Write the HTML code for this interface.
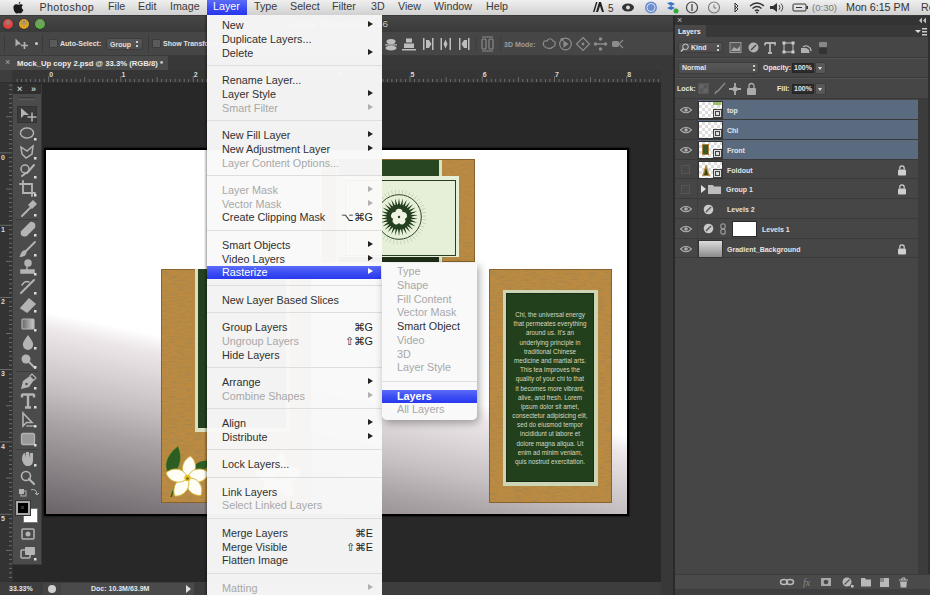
<!DOCTYPE html><html><head><meta charset="utf-8"><style>
*{margin:0;padding:0;box-sizing:border-box}
html,body{width:930px;height:595px;overflow:hidden;background:#282828;font-family:"Liberation Sans",sans-serif}
.a{position:absolute}
.t{position:absolute;white-space:nowrap}
.menu{position:absolute;background:rgba(249,249,249,0.968)}
.mi{position:absolute;left:15px;font-size:10.8px;color:#303030;white-space:nowrap;line-height:12px}
.dis{color:#a8a8a8}
.sep{position:absolute;left:0;right:0;height:1px;background:#dedede}
.arr{position:absolute;width:0;height:0;border-left:5px solid #222;border-top:3.5px solid transparent;border-bottom:3.5px solid transparent}
.arr.dis{border-left-color:#b0b0b0}
.sc{position:absolute;font-size:10.8px;color:#1c1c1c;line-height:12px;text-align:right;white-space:nowrap}
.pt{position:absolute;white-space:nowrap;font-size:7px;font-weight:bold;color:#e4e4e4;line-height:8px}
</style></head><body><div id="root" style="position:absolute;left:0;top:0;width:930px;height:595px;overflow:hidden">
<div class="a" style="left:0px;top:15px;width:675px;height:17px;background:linear-gradient(#474747,#3a3a3a)"></div>
<div class="t" style="left:238px;top:18px;width:200px;text-align:center;font-size:9.8px;color:#cfcfcf;line-height:12px;text-shadow:0 -1px 0 #222">Adobe Photoshop CS6</div>
<div class="a" style="left:3px;top:19px;width:10px;height:10px;border-radius:50%;background:radial-gradient(circle at 50% 35%,#fff6 0,#e0443e 45%,#e0443e 100%);box-shadow:0 0 0 0.5px #0006"></div>
<div class="a" style="left:19px;top:19px;width:10px;height:10px;border-radius:50%;background:radial-gradient(circle at 50% 35%,#fff6 0,#dea123 45%,#dea123 100%);box-shadow:0 0 0 0.5px #0006"></div>
<div class="a" style="left:35px;top:19px;width:10px;height:10px;border-radius:50%;background:radial-gradient(circle at 50% 35%,#fff6 0,#5fb043 45%,#5fb043 100%);box-shadow:0 0 0 0.5px #0006"></div>
<div class="a" style="left:0px;top:31px;width:675px;height:25px;background:#464646;border-top:1px solid #3a3a3a;border-bottom:1px solid #3a3a3a"></div>
<div class="a" style="left:0px;top:56px;width:675px;height:14px;background:#383838"></div>
<div class="a" style="left:0px;top:70px;width:662px;height:13px;background:#353535"></div>
<div class="a" style="left:0px;top:83px;width:12px;height:499px;background:#333333"></div>
<div class="a" style="left:661px;top:70px;width:12px;height:525px;background:#383838"></div>
<div class="a" style="left:673px;top:15px;width:2px;height:580px;background:#2a2a2a"></div>
<div class="a" style="left:0px;top:582px;width:661px;height:13px;background:#3d3d3d"></div>
<div class="a" style="left:4px;top:36px;width:1px;height:16px;background:#3a3a3a"></div>
<svg class="a" style="left:14px;top:37px" width="16" height="13" viewBox="0 0 16 13"><path d="M1.5 1.5 L1.5 9.5 L3.8 7.4 L7.5 7.4 Z" fill="#b0b0b0"/><path d="M10.5 5 v7 M7 8.5 h7" stroke="#b0b0b0" stroke-width="1.7"/></svg>
<div class="a" style="left:35px;top:42px;width:3px;height:3px;background:#ccc;border-radius:50%"></div>
<div class="a" style="left:42px;top:34px;width:1px;height:19px;background:#3a3a3a"></div>
<div class="a" style="left:49px;top:39px;width:9px;height:9px;background:#5a5a5a;border:1px solid #3c3c3c;border-radius:1px"></div>
<div class="t" style="left:60px;top:39px;font-size:7px;font-weight:bold;color:#e0e0e0;line-height:9px">Auto-Select:</div>
<div class="a" style="left:106px;top:38px;width:37px;height:12px;background:linear-gradient(#565656,#4e4e4e);border:1px solid #3c3c3c;border-radius:2px"></div>
<div class="t" style="left:110px;top:40.5px;font-size:7px;font-weight:bold;color:#e0e0e0;line-height:8px">Group</div>
<div class="a" style="left:136px;top:41px;width:2px;height:2px;background:#ccc"></div>
<div class="a" style="left:136px;top:45px;width:2px;height:2px;background:#ccc"></div>
<div class="a" style="left:148px;top:34px;width:1px;height:19px;background:#3a3a3a"></div>
<div class="a" style="left:152px;top:39px;width:9px;height:9px;background:#5a5a5a;border:1px solid #3c3c3c;border-radius:1px"></div>
<div class="t" style="left:163px;top:39px;font-size:7px;font-weight:bold;color:#e0e0e0;line-height:9px">Show Transform Controls</div>
<svg class="a" style="left:380px;top:35px" width="295" height="18" viewBox="0 0 295 18">
<g fill="#bdbdbd" stroke="none">
<path d="M5 9.3 h12 v1.2 h-12z"/><ellipse cx="11" cy="6.5" rx="4.5" ry="2.6"/><ellipse cx="11" cy="13" rx="5.5" ry="2.6"/>
<path d="M22 14 h14 v1.5 h-14z"/><rect x="26" y="3.5" width="6" height="4"/><rect x="24" y="8.5" width="10" height="4.5"/>
<rect x="43" y="3" width="1.5" height="12"/><rect x="52" y="3" width="1.5" height="12"/><path d="M46 5 h3 l2.5 4 l-2.5 4 h-3z"/>
<rect x="60.5" y="3" width="1.5" height="12"/><rect x="69.5" y="3" width="1.5" height="12"/><path d="M65.5 4.5 l2 4.5 l-2 4.5 l-2 -4.5z"/>
<rect x="79" y="3" width="1.5" height="12"/><rect x="88" y="3" width="1.5" height="12"/><path d="M87 5 h-3 l-2.5 4 l2.5 4 h3z"/>
</g>
<rect x="95.5" y="1" width="1" height="16" fill="#3c3c3c"/>
<g fill="none" stroke="#8a8a8a" stroke-width="1.2"><rect x="102" y="4" width="4" height="10" rx="1"/><rect x="109" y="4" width="4" height="10" rx="1"/><path d="M102 2 h11 M102 16 h11"/></g>
<rect x="120.5" y="1" width="1" height="16" fill="#3c3c3c"/>
<text x="124" y="11.5" font-family="Liberation Sans" font-size="7" font-weight="bold" fill="#9c9c9c">3D Mode:</text>
<g fill="none" stroke="#8c8c8c" stroke-width="1.2">
<path d="M164 11 c-2 -3 0 -6 3 -5 c1 -3 5 -3 6 0 c3 0 3 5 0 6 c-2 2 -7 2 -9 -1z"/>
<circle cx="185.5" cy="9" r="5.8"/><path d="M184 6.5 l3.5 2.5 l-3.5 2.5z" fill="#8c8c8c"/><circle cx="182" cy="4.5" r="1" fill="#8c8c8c"/>
<path d="M203 2.5 l6.5 6.5 l-6.5 6.5 l-6.5 -6.5 z"/><circle cx="203" cy="9" r="0.8" fill="#8c8c8c"/>
</g>
<g fill="#8c8c8c"><circle cx="220.5" cy="4" r="1.8"/><circle cx="220.5" cy="14" r="1.8"/><circle cx="215.5" cy="9" r="1.8"/><circle cx="225.5" cy="9" r="1.8"/><rect x="217" y="8.3" width="7" height="1.4"/>
<rect x="232" y="6" width="7" height="6" rx="1.5"/><path d="M239 9 l4 -4 M239 9 l4 4" stroke="#8c8c8c" stroke-width="1.1"/></g>
</svg>
<div class="a" style="left:0px;top:56px;width:168px;height:14px;background:#4a4a4a"></div>
<div class="t" style="left:5px;top:58px;font-size:9px;color:#aaa;line-height:9px">&#215;</div>
<div class="t" style="left:17px;top:58.5px;font-size:7.7px;font-weight:bold;color:#ececec;line-height:9px">Mock_Up copy 2.psd @ 33.3% (RGB/8) *</div>
<svg class="a" style="left:0;top:70px" width="662" height="13"><rect x="16.7" y="9" width="0.8" height="3" fill="#7a7a7a"/><rect x="21.2" y="9" width="0.8" height="3" fill="#7a7a7a"/><rect x="25.7" y="9" width="0.8" height="3" fill="#7a7a7a"/><rect x="30.2" y="9" width="0.8" height="3" fill="#7a7a7a"/><rect x="34.8" y="9" width="0.8" height="3" fill="#7a7a7a"/><rect x="39.3" y="9" width="0.8" height="3" fill="#7a7a7a"/><rect x="43.8" y="9" width="0.8" height="3" fill="#7a7a7a"/><rect x="48.3" y="6" width="0.8" height="6" fill="#7a7a7a"/><rect x="52.8" y="9" width="0.8" height="3" fill="#7a7a7a"/><rect x="57.3" y="9" width="0.8" height="3" fill="#7a7a7a"/><rect x="61.8" y="9" width="0.8" height="3" fill="#7a7a7a"/><rect x="66.4" y="9" width="0.8" height="3" fill="#7a7a7a"/><rect x="70.9" y="9" width="0.8" height="3" fill="#7a7a7a"/><rect x="75.4" y="9" width="0.8" height="3" fill="#7a7a7a"/><rect x="79.9" y="9" width="0.8" height="3" fill="#7a7a7a"/><rect x="84.4" y="7" width="0.8" height="5" fill="#7a7a7a"/><rect x="88.9" y="9" width="0.8" height="3" fill="#7a7a7a"/><rect x="93.5" y="9" width="0.8" height="3" fill="#7a7a7a"/><rect x="98.0" y="9" width="0.8" height="3" fill="#7a7a7a"/><rect x="102.5" y="9" width="0.8" height="3" fill="#7a7a7a"/><rect x="107.0" y="9" width="0.8" height="3" fill="#7a7a7a"/><rect x="111.5" y="9" width="0.8" height="3" fill="#7a7a7a"/><rect x="116.0" y="9" width="0.8" height="3" fill="#7a7a7a"/><rect x="120.5" y="6" width="0.8" height="6" fill="#7a7a7a"/><rect x="125.1" y="9" width="0.8" height="3" fill="#7a7a7a"/><rect x="129.6" y="9" width="0.8" height="3" fill="#7a7a7a"/><rect x="134.1" y="9" width="0.8" height="3" fill="#7a7a7a"/><rect x="138.6" y="9" width="0.8" height="3" fill="#7a7a7a"/><rect x="143.1" y="9" width="0.8" height="3" fill="#7a7a7a"/><rect x="147.6" y="9" width="0.8" height="3" fill="#7a7a7a"/><rect x="152.2" y="9" width="0.8" height="3" fill="#7a7a7a"/><rect x="156.7" y="7" width="0.8" height="5" fill="#7a7a7a"/><rect x="161.2" y="9" width="0.8" height="3" fill="#7a7a7a"/><rect x="165.7" y="9" width="0.8" height="3" fill="#7a7a7a"/><rect x="170.2" y="9" width="0.8" height="3" fill="#7a7a7a"/><rect x="174.7" y="9" width="0.8" height="3" fill="#7a7a7a"/><rect x="179.3" y="9" width="0.8" height="3" fill="#7a7a7a"/><rect x="183.8" y="9" width="0.8" height="3" fill="#7a7a7a"/><rect x="188.3" y="9" width="0.8" height="3" fill="#7a7a7a"/><rect x="192.8" y="6" width="0.8" height="6" fill="#7a7a7a"/><rect x="197.3" y="9" width="0.8" height="3" fill="#7a7a7a"/><rect x="201.8" y="9" width="0.8" height="3" fill="#7a7a7a"/><rect x="206.3" y="9" width="0.8" height="3" fill="#7a7a7a"/><rect x="210.9" y="9" width="0.8" height="3" fill="#7a7a7a"/><rect x="215.4" y="9" width="0.8" height="3" fill="#7a7a7a"/><rect x="219.9" y="9" width="0.8" height="3" fill="#7a7a7a"/><rect x="224.4" y="9" width="0.8" height="3" fill="#7a7a7a"/><rect x="228.9" y="7" width="0.8" height="5" fill="#7a7a7a"/><rect x="233.4" y="9" width="0.8" height="3" fill="#7a7a7a"/><rect x="238.0" y="9" width="0.8" height="3" fill="#7a7a7a"/><rect x="242.5" y="9" width="0.8" height="3" fill="#7a7a7a"/><rect x="247.0" y="9" width="0.8" height="3" fill="#7a7a7a"/><rect x="251.5" y="9" width="0.8" height="3" fill="#7a7a7a"/><rect x="256.0" y="9" width="0.8" height="3" fill="#7a7a7a"/><rect x="260.5" y="9" width="0.8" height="3" fill="#7a7a7a"/><rect x="265.1" y="6" width="0.8" height="6" fill="#7a7a7a"/><rect x="269.6" y="9" width="0.8" height="3" fill="#7a7a7a"/><rect x="274.1" y="9" width="0.8" height="3" fill="#7a7a7a"/><rect x="278.6" y="9" width="0.8" height="3" fill="#7a7a7a"/><rect x="283.1" y="9" width="0.8" height="3" fill="#7a7a7a"/><rect x="287.6" y="9" width="0.8" height="3" fill="#7a7a7a"/><rect x="292.1" y="9" width="0.8" height="3" fill="#7a7a7a"/><rect x="296.7" y="9" width="0.8" height="3" fill="#7a7a7a"/><rect x="301.2" y="7" width="0.8" height="5" fill="#7a7a7a"/><rect x="305.7" y="9" width="0.8" height="3" fill="#7a7a7a"/><rect x="310.2" y="9" width="0.8" height="3" fill="#7a7a7a"/><rect x="314.7" y="9" width="0.8" height="3" fill="#7a7a7a"/><rect x="319.2" y="9" width="0.8" height="3" fill="#7a7a7a"/><rect x="323.8" y="9" width="0.8" height="3" fill="#7a7a7a"/><rect x="328.3" y="9" width="0.8" height="3" fill="#7a7a7a"/><rect x="332.8" y="9" width="0.8" height="3" fill="#7a7a7a"/><rect x="337.3" y="6" width="0.8" height="6" fill="#7a7a7a"/><rect x="341.8" y="9" width="0.8" height="3" fill="#7a7a7a"/><rect x="346.3" y="9" width="0.8" height="3" fill="#7a7a7a"/><rect x="350.8" y="9" width="0.8" height="3" fill="#7a7a7a"/><rect x="355.4" y="9" width="0.8" height="3" fill="#7a7a7a"/><rect x="359.9" y="9" width="0.8" height="3" fill="#7a7a7a"/><rect x="364.4" y="9" width="0.8" height="3" fill="#7a7a7a"/><rect x="368.9" y="9" width="0.8" height="3" fill="#7a7a7a"/><rect x="373.4" y="7" width="0.8" height="5" fill="#7a7a7a"/><rect x="377.9" y="9" width="0.8" height="3" fill="#7a7a7a"/><rect x="382.5" y="9" width="0.8" height="3" fill="#7a7a7a"/><rect x="387.0" y="9" width="0.8" height="3" fill="#7a7a7a"/><rect x="391.5" y="9" width="0.8" height="3" fill="#7a7a7a"/><rect x="396.0" y="9" width="0.8" height="3" fill="#7a7a7a"/><rect x="400.5" y="9" width="0.8" height="3" fill="#7a7a7a"/><rect x="405.0" y="9" width="0.8" height="3" fill="#7a7a7a"/><rect x="409.6" y="6" width="0.8" height="6" fill="#7a7a7a"/><rect x="414.1" y="9" width="0.8" height="3" fill="#7a7a7a"/><rect x="418.6" y="9" width="0.8" height="3" fill="#7a7a7a"/><rect x="423.1" y="9" width="0.8" height="3" fill="#7a7a7a"/><rect x="427.6" y="9" width="0.8" height="3" fill="#7a7a7a"/><rect x="432.1" y="9" width="0.8" height="3" fill="#7a7a7a"/><rect x="436.6" y="9" width="0.8" height="3" fill="#7a7a7a"/><rect x="441.2" y="9" width="0.8" height="3" fill="#7a7a7a"/><rect x="445.7" y="7" width="0.8" height="5" fill="#7a7a7a"/><rect x="450.2" y="9" width="0.8" height="3" fill="#7a7a7a"/><rect x="454.7" y="9" width="0.8" height="3" fill="#7a7a7a"/><rect x="459.2" y="9" width="0.8" height="3" fill="#7a7a7a"/><rect x="463.7" y="9" width="0.8" height="3" fill="#7a7a7a"/><rect x="468.3" y="9" width="0.8" height="3" fill="#7a7a7a"/><rect x="472.8" y="9" width="0.8" height="3" fill="#7a7a7a"/><rect x="477.3" y="9" width="0.8" height="3" fill="#7a7a7a"/><rect x="481.8" y="6" width="0.8" height="6" fill="#7a7a7a"/><rect x="486.3" y="9" width="0.8" height="3" fill="#7a7a7a"/><rect x="490.8" y="9" width="0.8" height="3" fill="#7a7a7a"/><rect x="495.3" y="9" width="0.8" height="3" fill="#7a7a7a"/><rect x="499.9" y="9" width="0.8" height="3" fill="#7a7a7a"/><rect x="504.4" y="9" width="0.8" height="3" fill="#7a7a7a"/><rect x="508.9" y="9" width="0.8" height="3" fill="#7a7a7a"/><rect x="513.4" y="9" width="0.8" height="3" fill="#7a7a7a"/><rect x="517.9" y="7" width="0.8" height="5" fill="#7a7a7a"/><rect x="522.4" y="9" width="0.8" height="3" fill="#7a7a7a"/><rect x="527.0" y="9" width="0.8" height="3" fill="#7a7a7a"/><rect x="531.5" y="9" width="0.8" height="3" fill="#7a7a7a"/><rect x="536.0" y="9" width="0.8" height="3" fill="#7a7a7a"/><rect x="540.5" y="9" width="0.8" height="3" fill="#7a7a7a"/><rect x="545.0" y="9" width="0.8" height="3" fill="#7a7a7a"/><rect x="549.5" y="9" width="0.8" height="3" fill="#7a7a7a"/><rect x="554.0" y="6" width="0.8" height="6" fill="#7a7a7a"/><rect x="558.6" y="9" width="0.8" height="3" fill="#7a7a7a"/><rect x="563.1" y="9" width="0.8" height="3" fill="#7a7a7a"/><rect x="567.6" y="9" width="0.8" height="3" fill="#7a7a7a"/><rect x="572.1" y="9" width="0.8" height="3" fill="#7a7a7a"/><rect x="576.6" y="9" width="0.8" height="3" fill="#7a7a7a"/><rect x="581.1" y="9" width="0.8" height="3" fill="#7a7a7a"/><rect x="585.7" y="9" width="0.8" height="3" fill="#7a7a7a"/><rect x="590.2" y="7" width="0.8" height="5" fill="#7a7a7a"/><rect x="594.7" y="9" width="0.8" height="3" fill="#7a7a7a"/><rect x="599.2" y="9" width="0.8" height="3" fill="#7a7a7a"/><rect x="603.7" y="9" width="0.8" height="3" fill="#7a7a7a"/><rect x="608.2" y="9" width="0.8" height="3" fill="#7a7a7a"/><rect x="612.8" y="9" width="0.8" height="3" fill="#7a7a7a"/><rect x="617.3" y="9" width="0.8" height="3" fill="#7a7a7a"/><rect x="621.8" y="9" width="0.8" height="3" fill="#7a7a7a"/><rect x="626.3" y="6" width="0.8" height="6" fill="#7a7a7a"/><rect x="630.8" y="9" width="0.8" height="3" fill="#7a7a7a"/><rect x="635.3" y="9" width="0.8" height="3" fill="#7a7a7a"/><rect x="639.8" y="9" width="0.8" height="3" fill="#7a7a7a"/><rect x="644.4" y="9" width="0.8" height="3" fill="#7a7a7a"/><rect x="648.9" y="9" width="0.8" height="3" fill="#7a7a7a"/><rect x="653.4" y="9" width="0.8" height="3" fill="#7a7a7a"/><rect x="657.9" y="9" width="0.8" height="3" fill="#7a7a7a"/></svg>
<div class="t" style="left:49.3px;top:71px;font-size:7px;font-weight:bold;color:#d8d8d8;line-height:8px">0</div>
<div class="t" style="left:121.55px;top:71px;font-size:7px;font-weight:bold;color:#d8d8d8;line-height:8px">1</div>
<div class="t" style="left:193.8px;top:71px;font-size:7px;font-weight:bold;color:#d8d8d8;line-height:8px">2</div>
<div class="t" style="left:266.05px;top:71px;font-size:7px;font-weight:bold;color:#d8d8d8;line-height:8px">3</div>
<div class="t" style="left:338.3px;top:71px;font-size:7px;font-weight:bold;color:#d8d8d8;line-height:8px">4</div>
<div class="t" style="left:410.55px;top:71px;font-size:7px;font-weight:bold;color:#d8d8d8;line-height:8px">5</div>
<div class="t" style="left:482.8px;top:71px;font-size:7px;font-weight:bold;color:#d8d8d8;line-height:8px">6</div>
<div class="t" style="left:555.05px;top:71px;font-size:7px;font-weight:bold;color:#d8d8d8;line-height:8px">7</div>
<div class="t" style="left:627.3px;top:71px;font-size:7px;font-weight:bold;color:#d8d8d8;line-height:8px">8</div>
<div class="a" style="left:0px;top:70px;width:12px;height:12px;background:#3e3e3e"></div>
<svg class="a" style="left:0;top:83px" width="12" height="499"><rect x="9" y="1.8" width="3" height="0.8" fill="#7a7a7a"/><rect x="9" y="6.3" width="3" height="0.8" fill="#7a7a7a"/><rect x="9" y="10.8" width="3" height="0.8" fill="#7a7a7a"/><rect x="9" y="15.3" width="3" height="0.8" fill="#7a7a7a"/><rect x="9" y="19.8" width="3" height="0.8" fill="#7a7a7a"/><rect x="9" y="24.3" width="3" height="0.8" fill="#7a7a7a"/><rect x="9" y="28.9" width="3" height="0.8" fill="#7a7a7a"/><rect x="6" y="33.4" width="6" height="0.8" fill="#7a7a7a"/><rect x="9" y="37.9" width="3" height="0.8" fill="#7a7a7a"/><rect x="9" y="42.4" width="3" height="0.8" fill="#7a7a7a"/><rect x="9" y="46.9" width="3" height="0.8" fill="#7a7a7a"/><rect x="9" y="51.4" width="3" height="0.8" fill="#7a7a7a"/><rect x="9" y="56.0" width="3" height="0.8" fill="#7a7a7a"/><rect x="9" y="60.5" width="3" height="0.8" fill="#7a7a7a"/><rect x="9" y="65.0" width="3" height="0.8" fill="#7a7a7a"/><rect x="0" y="69.5" width="12" height="0.8" fill="#7a7a7a"/><rect x="9" y="74.0" width="3" height="0.8" fill="#7a7a7a"/><rect x="9" y="78.5" width="3" height="0.8" fill="#7a7a7a"/><rect x="9" y="83.0" width="3" height="0.8" fill="#7a7a7a"/><rect x="9" y="87.6" width="3" height="0.8" fill="#7a7a7a"/><rect x="9" y="92.1" width="3" height="0.8" fill="#7a7a7a"/><rect x="9" y="96.6" width="3" height="0.8" fill="#7a7a7a"/><rect x="9" y="101.1" width="3" height="0.8" fill="#7a7a7a"/><rect x="6" y="105.6" width="6" height="0.8" fill="#7a7a7a"/><rect x="9" y="110.1" width="3" height="0.8" fill="#7a7a7a"/><rect x="9" y="114.7" width="3" height="0.8" fill="#7a7a7a"/><rect x="9" y="119.2" width="3" height="0.8" fill="#7a7a7a"/><rect x="9" y="123.7" width="3" height="0.8" fill="#7a7a7a"/><rect x="9" y="128.2" width="3" height="0.8" fill="#7a7a7a"/><rect x="9" y="132.7" width="3" height="0.8" fill="#7a7a7a"/><rect x="9" y="137.2" width="3" height="0.8" fill="#7a7a7a"/><rect x="0" y="141.8" width="12" height="0.8" fill="#7a7a7a"/><rect x="9" y="146.3" width="3" height="0.8" fill="#7a7a7a"/><rect x="9" y="150.8" width="3" height="0.8" fill="#7a7a7a"/><rect x="9" y="155.3" width="3" height="0.8" fill="#7a7a7a"/><rect x="9" y="159.8" width="3" height="0.8" fill="#7a7a7a"/><rect x="9" y="164.3" width="3" height="0.8" fill="#7a7a7a"/><rect x="9" y="168.8" width="3" height="0.8" fill="#7a7a7a"/><rect x="9" y="173.4" width="3" height="0.8" fill="#7a7a7a"/><rect x="6" y="177.9" width="6" height="0.8" fill="#7a7a7a"/><rect x="9" y="182.4" width="3" height="0.8" fill="#7a7a7a"/><rect x="9" y="186.9" width="3" height="0.8" fill="#7a7a7a"/><rect x="9" y="191.4" width="3" height="0.8" fill="#7a7a7a"/><rect x="9" y="195.9" width="3" height="0.8" fill="#7a7a7a"/><rect x="9" y="200.5" width="3" height="0.8" fill="#7a7a7a"/><rect x="9" y="205.0" width="3" height="0.8" fill="#7a7a7a"/><rect x="9" y="209.5" width="3" height="0.8" fill="#7a7a7a"/><rect x="0" y="214.0" width="12" height="0.8" fill="#7a7a7a"/><rect x="9" y="218.5" width="3" height="0.8" fill="#7a7a7a"/><rect x="9" y="223.0" width="3" height="0.8" fill="#7a7a7a"/><rect x="9" y="227.5" width="3" height="0.8" fill="#7a7a7a"/><rect x="9" y="232.1" width="3" height="0.8" fill="#7a7a7a"/><rect x="9" y="236.6" width="3" height="0.8" fill="#7a7a7a"/><rect x="9" y="241.1" width="3" height="0.8" fill="#7a7a7a"/><rect x="9" y="245.6" width="3" height="0.8" fill="#7a7a7a"/><rect x="6" y="250.1" width="6" height="0.8" fill="#7a7a7a"/><rect x="9" y="254.6" width="3" height="0.8" fill="#7a7a7a"/><rect x="9" y="259.2" width="3" height="0.8" fill="#7a7a7a"/><rect x="9" y="263.7" width="3" height="0.8" fill="#7a7a7a"/><rect x="9" y="268.2" width="3" height="0.8" fill="#7a7a7a"/><rect x="9" y="272.7" width="3" height="0.8" fill="#7a7a7a"/><rect x="9" y="277.2" width="3" height="0.8" fill="#7a7a7a"/><rect x="9" y="281.7" width="3" height="0.8" fill="#7a7a7a"/><rect x="0" y="286.2" width="12" height="0.8" fill="#7a7a7a"/><rect x="9" y="290.8" width="3" height="0.8" fill="#7a7a7a"/><rect x="9" y="295.3" width="3" height="0.8" fill="#7a7a7a"/><rect x="9" y="299.8" width="3" height="0.8" fill="#7a7a7a"/><rect x="9" y="304.3" width="3" height="0.8" fill="#7a7a7a"/><rect x="9" y="308.8" width="3" height="0.8" fill="#7a7a7a"/><rect x="9" y="313.3" width="3" height="0.8" fill="#7a7a7a"/><rect x="9" y="317.9" width="3" height="0.8" fill="#7a7a7a"/><rect x="6" y="322.4" width="6" height="0.8" fill="#7a7a7a"/><rect x="9" y="326.9" width="3" height="0.8" fill="#7a7a7a"/><rect x="9" y="331.4" width="3" height="0.8" fill="#7a7a7a"/><rect x="9" y="335.9" width="3" height="0.8" fill="#7a7a7a"/><rect x="9" y="340.4" width="3" height="0.8" fill="#7a7a7a"/><rect x="9" y="345.0" width="3" height="0.8" fill="#7a7a7a"/><rect x="9" y="349.5" width="3" height="0.8" fill="#7a7a7a"/><rect x="9" y="354.0" width="3" height="0.8" fill="#7a7a7a"/><rect x="0" y="358.5" width="12" height="0.8" fill="#7a7a7a"/><rect x="9" y="363.0" width="3" height="0.8" fill="#7a7a7a"/><rect x="9" y="367.5" width="3" height="0.8" fill="#7a7a7a"/><rect x="9" y="372.0" width="3" height="0.8" fill="#7a7a7a"/><rect x="9" y="376.6" width="3" height="0.8" fill="#7a7a7a"/><rect x="9" y="381.1" width="3" height="0.8" fill="#7a7a7a"/><rect x="9" y="385.6" width="3" height="0.8" fill="#7a7a7a"/><rect x="9" y="390.1" width="3" height="0.8" fill="#7a7a7a"/><rect x="6" y="394.6" width="6" height="0.8" fill="#7a7a7a"/><rect x="9" y="399.1" width="3" height="0.8" fill="#7a7a7a"/><rect x="9" y="403.7" width="3" height="0.8" fill="#7a7a7a"/><rect x="9" y="408.2" width="3" height="0.8" fill="#7a7a7a"/><rect x="9" y="412.7" width="3" height="0.8" fill="#7a7a7a"/><rect x="9" y="417.2" width="3" height="0.8" fill="#7a7a7a"/><rect x="9" y="421.7" width="3" height="0.8" fill="#7a7a7a"/><rect x="9" y="426.2" width="3" height="0.8" fill="#7a7a7a"/><rect x="0" y="430.8" width="12" height="0.8" fill="#7a7a7a"/><rect x="9" y="435.3" width="3" height="0.8" fill="#7a7a7a"/><rect x="9" y="439.8" width="3" height="0.8" fill="#7a7a7a"/><rect x="9" y="444.3" width="3" height="0.8" fill="#7a7a7a"/><rect x="9" y="448.8" width="3" height="0.8" fill="#7a7a7a"/><rect x="9" y="453.3" width="3" height="0.8" fill="#7a7a7a"/><rect x="9" y="457.8" width="3" height="0.8" fill="#7a7a7a"/><rect x="9" y="462.4" width="3" height="0.8" fill="#7a7a7a"/><rect x="6" y="466.9" width="6" height="0.8" fill="#7a7a7a"/><rect x="9" y="471.4" width="3" height="0.8" fill="#7a7a7a"/><rect x="9" y="475.9" width="3" height="0.8" fill="#7a7a7a"/><rect x="9" y="480.4" width="3" height="0.8" fill="#7a7a7a"/><rect x="9" y="484.9" width="3" height="0.8" fill="#7a7a7a"/><rect x="9" y="489.5" width="3" height="0.8" fill="#7a7a7a"/><rect x="9" y="494.0" width="3" height="0.8" fill="#7a7a7a"/></svg>
<div class="t" style="left:1px;top:153.5px;font-size:7px;font-weight:bold;color:#d8d8d8;line-height:8px">0</div>
<div class="t" style="left:1px;top:225.75px;font-size:7px;font-weight:bold;color:#d8d8d8;line-height:8px">1</div>
<div class="t" style="left:1px;top:298.0px;font-size:7px;font-weight:bold;color:#d8d8d8;line-height:8px">2</div>
<div class="t" style="left:1px;top:370.25px;font-size:7px;font-weight:bold;color:#d8d8d8;line-height:8px">3</div>
<div class="t" style="left:1px;top:442.5px;font-size:7px;font-weight:bold;color:#d8d8d8;line-height:8px">4</div>
<div class="t" style="left:1px;top:514.75px;font-size:7px;font-weight:bold;color:#d8d8d8;line-height:8px">5</div>
<div class="a" style="left:12px;top:83px;width:1px;height:499px;background:#2e2e2e"></div>
<div class="a" style="left:0px;top:82px;width:662px;height:1px;background:#2e2e2e"></div>
<div class="t" style="left:9px;top:585px;font-size:7px;font-weight:bold;color:#e8e8e8;line-height:8px">33.33%</div>
<div class="a" style="left:43px;top:583px;width:18px;height:12px;background:#444"></div>
<div class="a" style="left:48px;top:585px;width:8px;height:8px;background:#d0d0d0;border-radius:50%"></div>
<div class="a" style="left:61px;top:583px;width:133px;height:12px;background:#4a4a4a"></div>
<div class="t" style="left:91px;top:585px;font-size:7px;font-weight:bold;color:#e8e8e8;line-height:8px">Doc: 10.3M/63.9M</div>
<div class="a" style="left:186px;top:585px;width:0;height:0;border-left:5px solid #e0e0e0;border-top:4px solid transparent;border-bottom:4px solid transparent"></div>
<div class="a" style="left:44px;top:147.5px;width:585px;height:368.5px;background:#000;box-shadow:0 0 2px #000"></div>
<div class="a" style="left:46px;top:150px;width:581px;height:364px;overflow:hidden;background:linear-gradient(192deg,#fff 0%,#fff 58.5%,#ede7ea 62%,#c6c0c3 74%,#aaa3a6 81%,#6a6266 100%)">
<svg class="a" style="left:115px;top:119px" width="150" height="234"><defs><filter id="ck115_119" x="0" y="0" width="100%" height="100%"><feTurbulence type="fractalNoise" baseFrequency="0.12 0.7" numOctaves="3" seed="5"/><feColorMatrix values="0 0 0 0 0.40  0 0 0 0 0.24  0 0 0 0 0.07  0 0 0 -3.0 1.72"/></filter></defs><rect width="150" height="234" fill="#bc8a40"/><rect width="150" height="234" filter="url(#ck115_119)"/><rect x="0.5" y="0.5" width="149" height="233" fill="none" stroke="#6a4a20" stroke-opacity="0.6"/></svg>
<div class="a" style="left:148.5px;top:119px;width:95px;height:163px;background:#d8e0c0"></div>
<div class="a" style="left:152px;top:119px;width:88px;height:159px;background:#23401f"></div>
<svg class="a" style="left:109px;top:290px" width="60" height="70" viewBox="155 440 60 70">
<path d="M167 471 C163 462 170 452 178 446 C182 455 181 465 176 471 Z" fill="#2c5e22" stroke="#8a9a30" stroke-width="0.6"/>
<path d="M194 466 C198 461 204 460 210 461 C207 469 201 474 195 474 Z" fill="#2c5e22"/>
<path d="M171 497 L175 486" stroke="#2c5e22" stroke-width="1.5"/>
<g transform="translate(187.5,478)" fill="#fffef6" stroke="#d6b43a" stroke-width="0.9"><path d="M0 0 C -9 -5 -8 -17 0 -22 C 8 -17 9 -5 0 0 Z" transform="rotate(8)"/><path d="M0 0 C -9 -5 -8 -17 0 -22 C 8 -17 9 -5 0 0 Z" transform="rotate(77)"/><path d="M0 0 C -9 -5 -8 -17 0 -22 C 8 -17 9 -5 0 0 Z" transform="rotate(142)"/><path d="M0 0 C -9 -5 -8 -17 0 -22 C 8 -17 9 -5 0 0 Z" transform="rotate(215)"/><path d="M0 0 C -9 -5 -8 -17 0 -22 C 8 -17 9 -5 0 0 Z" transform="rotate(283)"/></g>
<circle cx="187.5" cy="478" r="3.2" fill="#e6c020"/><circle cx="187.5" cy="478.5" r="1.2" fill="#7a5a10"/></svg>
<svg class="a" style="left:202px;top:297px" width="60" height="60" viewBox="-30 -30 60 60"><g fill="#fffef6" stroke="#d6b43a" stroke-width="0.9"><path d="M0 0 C -10 -6 -9 -19 0 -24 C 9 -19 10 -6 0 0 Z" transform="rotate(8)"/><path d="M0 0 C -10 -6 -9 -19 0 -24 C 9 -19 10 -6 0 0 Z" transform="rotate(77)"/><path d="M0 0 C -10 -6 -9 -19 0 -24 C 9 -19 10 -6 0 0 Z" transform="rotate(142)"/><path d="M0 0 C -10 -6 -9 -19 0 -24 C 9 -19 10 -6 0 0 Z" transform="rotate(215)"/><path d="M0 0 C -10 -6 -9 -19 0 -24 C 9 -19 10 -6 0 0 Z" transform="rotate(283)"/></g><circle r="3.2" fill="#e6c020"/></svg>
<svg class="a" style="left:276px;top:9px" width="153" height="103"><defs><filter id="ck276_9" x="0" y="0" width="100%" height="100%"><feTurbulence type="fractalNoise" baseFrequency="0.12 0.7" numOctaves="3" seed="5"/><feColorMatrix values="0 0 0 0 0.40  0 0 0 0 0.24  0 0 0 0 0.07  0 0 0 -3.0 1.72"/></filter></defs><rect width="153" height="103" fill="#bc8a40"/><rect width="153" height="103" filter="url(#ck276_9)"/><rect x="0.5" y="0.5" width="152" height="102" fill="none" stroke="#6a4a20" stroke-opacity="0.6"/></svg>
<div class="a" style="left:290px;top:9.5px;width:105.6px;height:102.5px;background:#d8e4c4"></div>
<div class="a" style="left:293px;top:10px;width:99.5px;height:16px;background:#28461f"></div>
<div class="a" style="left:296px;top:26px;width:116.7px;height:81px;background:#e6f0d8"></div>
<div class="a" style="left:299px;top:30px;width:111px;height:76px;border:1.5px solid #2a3f22"></div>
<div class="a" style="left:293px;top:107px;width:99.5px;height:5px;background:#1e2e18"></div>
<svg class="a" style="left:323.4px;top:37.19999999999999px" width="60" height="60" viewBox="-30 -30 60 60">
<g stroke="#b8c4a0" stroke-width="0.6" fill="none"><path d="M0 -23.5 v-4" transform="rotate(0)"/><path d="M0 -23.5 v-4" transform="rotate(8)"/><path d="M0 -23.5 v-4" transform="rotate(16)"/><path d="M0 -23.5 v-4" transform="rotate(24)"/><path d="M0 -23.5 v-4" transform="rotate(32)"/><path d="M0 -23.5 v-4" transform="rotate(40)"/><path d="M0 -23.5 v-4" transform="rotate(48)"/><path d="M0 -23.5 v-4" transform="rotate(56)"/><path d="M0 -23.5 v-4" transform="rotate(64)"/><path d="M0 -23.5 v-4" transform="rotate(72)"/><path d="M0 -23.5 v-4" transform="rotate(80)"/><path d="M0 -23.5 v-4" transform="rotate(88)"/><path d="M0 -23.5 v-4" transform="rotate(96)"/><path d="M0 -23.5 v-4" transform="rotate(104)"/><path d="M0 -23.5 v-4" transform="rotate(112)"/><path d="M0 -23.5 v-4" transform="rotate(120)"/><path d="M0 -23.5 v-4" transform="rotate(128)"/><path d="M0 -23.5 v-4" transform="rotate(136)"/><path d="M0 -23.5 v-4" transform="rotate(144)"/><path d="M0 -23.5 v-4" transform="rotate(152)"/><path d="M0 -23.5 v-4" transform="rotate(160)"/><path d="M0 -23.5 v-4" transform="rotate(168)"/><path d="M0 -23.5 v-4" transform="rotate(176)"/><path d="M0 -23.5 v-4" transform="rotate(184)"/><path d="M0 -23.5 v-4" transform="rotate(192)"/><path d="M0 -23.5 v-4" transform="rotate(200)"/><path d="M0 -23.5 v-4" transform="rotate(208)"/><path d="M0 -23.5 v-4" transform="rotate(216)"/><path d="M0 -23.5 v-4" transform="rotate(224)"/><path d="M0 -23.5 v-4" transform="rotate(232)"/><path d="M0 -23.5 v-4" transform="rotate(240)"/><path d="M0 -23.5 v-4" transform="rotate(248)"/><path d="M0 -23.5 v-4" transform="rotate(256)"/><path d="M0 -23.5 v-4" transform="rotate(264)"/><path d="M0 -23.5 v-4" transform="rotate(272)"/><path d="M0 -23.5 v-4" transform="rotate(280)"/><path d="M0 -23.5 v-4" transform="rotate(288)"/><path d="M0 -23.5 v-4" transform="rotate(296)"/><path d="M0 -23.5 v-4" transform="rotate(304)"/><path d="M0 -23.5 v-4" transform="rotate(312)"/><path d="M0 -23.5 v-4" transform="rotate(320)"/><path d="M0 -23.5 v-4" transform="rotate(328)"/><path d="M0 -23.5 v-4" transform="rotate(336)"/><path d="M0 -23.5 v-4" transform="rotate(344)"/><path d="M0 -23.5 v-4" transform="rotate(352)"/></g>
<circle r="22.3" fill="none" stroke="#2a4524" stroke-width="1"/>
<g fill="#1f3a1a"><path d="M-1.3 -10 L0 -19 L1.3 -10 Z" transform="rotate(0)"/><path d="M-1.3 -10 L0 -19 L1.3 -10 Z" transform="rotate(12)"/><path d="M-1.3 -10 L0 -19 L1.3 -10 Z" transform="rotate(24)"/><path d="M-1.3 -10 L0 -19 L1.3 -10 Z" transform="rotate(36)"/><path d="M-1.3 -10 L0 -19 L1.3 -10 Z" transform="rotate(48)"/><path d="M-1.3 -10 L0 -19 L1.3 -10 Z" transform="rotate(60)"/><path d="M-1.3 -10 L0 -19 L1.3 -10 Z" transform="rotate(72)"/><path d="M-1.3 -10 L0 -19 L1.3 -10 Z" transform="rotate(84)"/><path d="M-1.3 -10 L0 -19 L1.3 -10 Z" transform="rotate(96)"/><path d="M-1.3 -10 L0 -19 L1.3 -10 Z" transform="rotate(108)"/><path d="M-1.3 -10 L0 -19 L1.3 -10 Z" transform="rotate(120)"/><path d="M-1.3 -10 L0 -19 L1.3 -10 Z" transform="rotate(132)"/><path d="M-1.3 -10 L0 -19 L1.3 -10 Z" transform="rotate(144)"/><path d="M-1.3 -10 L0 -19 L1.3 -10 Z" transform="rotate(156)"/><path d="M-1.3 -10 L0 -19 L1.3 -10 Z" transform="rotate(168)"/><path d="M-1.3 -10 L0 -19 L1.3 -10 Z" transform="rotate(180)"/><path d="M-1.3 -10 L0 -19 L1.3 -10 Z" transform="rotate(192)"/><path d="M-1.3 -10 L0 -19 L1.3 -10 Z" transform="rotate(204)"/><path d="M-1.3 -10 L0 -19 L1.3 -10 Z" transform="rotate(216)"/><path d="M-1.3 -10 L0 -19 L1.3 -10 Z" transform="rotate(228)"/><path d="M-1.3 -10 L0 -19 L1.3 -10 Z" transform="rotate(240)"/><path d="M-1.3 -10 L0 -19 L1.3 -10 Z" transform="rotate(252)"/><path d="M-1.3 -10 L0 -19 L1.3 -10 Z" transform="rotate(264)"/><path d="M-1.3 -10 L0 -19 L1.3 -10 Z" transform="rotate(276)"/><path d="M-1.3 -10 L0 -19 L1.3 -10 Z" transform="rotate(288)"/><path d="M-1.3 -10 L0 -19 L1.3 -10 Z" transform="rotate(300)"/><path d="M-1.3 -10 L0 -19 L1.3 -10 Z" transform="rotate(312)"/><path d="M-1.3 -10 L0 -19 L1.3 -10 Z" transform="rotate(324)"/><path d="M-1.3 -10 L0 -19 L1.3 -10 Z" transform="rotate(336)"/><path d="M-1.3 -10 L0 -19 L1.3 -10 Z" transform="rotate(348)"/></g>
<circle r="12.5" fill="#24401e"/>
<g fill="#eef3e2"><circle cx="0" cy="-4.6" r="3.6" transform="rotate(0)"/><circle cx="0" cy="-4.6" r="3.6" transform="rotate(72)"/><circle cx="0" cy="-4.6" r="3.6" transform="rotate(144)"/><circle cx="0" cy="-4.6" r="3.6" transform="rotate(216)"/><circle cx="0" cy="-4.6" r="3.6" transform="rotate(288)"/><circle r="4.5"/></g><circle r="1.2" fill="#24401e"/></svg>
<svg class="a" style="left:443px;top:119px" width="123" height="234"><defs><filter id="ck443_119" x="0" y="0" width="100%" height="100%"><feTurbulence type="fractalNoise" baseFrequency="0.12 0.7" numOctaves="3" seed="5"/><feColorMatrix values="0 0 0 0 0.40  0 0 0 0 0.24  0 0 0 0 0.07  0 0 0 -3.0 1.72"/></filter></defs><rect width="123" height="234" fill="#bc8a40"/><rect width="123" height="234" filter="url(#ck443_119)"/><rect x="0.5" y="0.5" width="122" height="233" fill="none" stroke="#6a4a20" stroke-opacity="0.6"/></svg>
<div class="a" style="left:456.5px;top:139.5px;width:95px;height:196.5px;background:#ccd5b4"></div>
<div class="a" style="left:461px;top:144px;width:85.7px;height:187px;background:#23401c;box-shadow:0 0 0 1px #1a2a14"></div>
<div class="t" style="left:454px;top:161.00px;width:100px;text-align:center;font-size:6.3px;font-weight:normal;color:#d4dac4;line-height:7px">Chi, the universal energy</div>
<div class="t" style="left:454px;top:170.19px;width:100px;text-align:center;font-size:6.3px;font-weight:normal;color:#d4dac4;line-height:7px">that permeates everything</div>
<div class="t" style="left:454px;top:179.38px;width:100px;text-align:center;font-size:6.3px;font-weight:normal;color:#d4dac4;line-height:7px">around us. It's an</div>
<div class="t" style="left:454px;top:188.57px;width:100px;text-align:center;font-size:6.3px;font-weight:normal;color:#d4dac4;line-height:7px">underlying principle in</div>
<div class="t" style="left:454px;top:197.76px;width:100px;text-align:center;font-size:6.3px;font-weight:normal;color:#d4dac4;line-height:7px">traditional Chinese</div>
<div class="t" style="left:454px;top:206.95px;width:100px;text-align:center;font-size:6.3px;font-weight:normal;color:#d4dac4;line-height:7px">medicine and martial arts.</div>
<div class="t" style="left:454px;top:216.14px;width:100px;text-align:center;font-size:6.3px;font-weight:normal;color:#d4dac4;line-height:7px">This tea improves the</div>
<div class="t" style="left:454px;top:225.33px;width:100px;text-align:center;font-size:6.3px;font-weight:normal;color:#d4dac4;line-height:7px">quality of your chi to that</div>
<div class="t" style="left:454px;top:234.52px;width:100px;text-align:center;font-size:6.3px;font-weight:normal;color:#d4dac4;line-height:7px">it becomes more vibrant,</div>
<div class="t" style="left:454px;top:243.71px;width:100px;text-align:center;font-size:6.3px;font-weight:normal;color:#d4dac4;line-height:7px">alive, and fresh. Lorem</div>
<div class="t" style="left:454px;top:252.90px;width:100px;text-align:center;font-size:6.3px;font-weight:normal;color:#d4dac4;line-height:7px">ipsum dolor sit amet,</div>
<div class="t" style="left:454px;top:262.09px;width:100px;text-align:center;font-size:6.3px;font-weight:normal;color:#d4dac4;line-height:7px">consectetur adipisicing elit,</div>
<div class="t" style="left:454px;top:271.28px;width:100px;text-align:center;font-size:6.3px;font-weight:normal;color:#d4dac4;line-height:7px">sed do eiusmod tempor</div>
<div class="t" style="left:454px;top:280.47px;width:100px;text-align:center;font-size:6.3px;font-weight:normal;color:#d4dac4;line-height:7px">incididunt ut labore et</div>
<div class="t" style="left:454px;top:289.66px;width:100px;text-align:center;font-size:6.3px;font-weight:normal;color:#d4dac4;line-height:7px">dolore magna aliqua. Ut</div>
<div class="t" style="left:454px;top:298.85px;width:100px;text-align:center;font-size:6.3px;font-weight:normal;color:#d4dac4;line-height:7px">enim ad minim veniam,</div>
<div class="t" style="left:454px;top:308.04px;width:100px;text-align:center;font-size:6.3px;font-weight:normal;color:#d4dac4;line-height:7px">quis nostrud exercitation.</div>
</div>
<div class="a" style="left:13px;top:85px;width:28px;height:479px;background:#4b4b4b;box-shadow:0 0 0 1px #393939"></div>
<div class="a" style="left:13px;top:84px;width:28px;height:10px;background:#2f2f2f"></div>
<div class="t" style="left:17px;top:84.5px;font-size:9px;font-weight:bold;color:#c8c8c8;line-height:9px">&#215;</div>
<div class="t" style="left:31px;top:84.5px;font-size:9px;font-weight:bold;color:#c8c8c8;line-height:9px">&#187;</div>
<div class="a" style="left:19px;top:97px;width:16px;height:1px;background:#3a3a3a"></div>
<div class="a" style="left:19px;top:99px;width:16px;height:1px;background:#5a5a5a"></div>
<div class="a" style="left:17px;top:106px;width:20px;height:17px;background:#3a3a3a;border:1px solid #333"></div>
<svg class="a" style="left:17px;top:105px" width="22" height="18" viewBox="-11 -9 22 18"><g fill="#b4b4b4" stroke="#b4b4b4" stroke-width="1.5" stroke-linecap="round"><path d="M-7 -6 L-7 4 L-4 1 L1 1 Z" stroke="none"/><path d="M4 -1 v8 M0 3 h8" fill="none" stroke-width="1.5"/></g></svg>
<svg class="a" style="left:17px;top:124px" width="22" height="18" viewBox="-11 -9 22 18"><g fill="#b4b4b4" stroke="#b4b4b4" stroke-width="1.5" stroke-linecap="round"><ellipse cx="-1" cy="0" rx="6.5" ry="5" fill="none" stroke-dasharray="2 1.2"/></g><rect x="6" y="5" width="2.5" height="2.5" fill="#ddd" stroke="none"/></svg>
<svg class="a" style="left:17px;top:143px" width="22" height="18" viewBox="-11 -9 22 18"><g fill="#b4b4b4" stroke="#b4b4b4" stroke-width="1.5" stroke-linecap="round"><path d="M-7 -5 L-1 -1 L5 -6 L4 2 L-2 6 L-6 2 Z" fill="none"/></g><rect x="6" y="5" width="2.5" height="2.5" fill="#ddd" stroke="none"/></svg>
<svg class="a" style="left:17px;top:161.5px" width="22" height="18" viewBox="-11 -9 22 18"><g fill="#b4b4b4" stroke="#b4b4b4" stroke-width="1.5" stroke-linecap="round"><circle cx="-3" cy="-2" r="4" fill="none"/><path d="M-1 2 L6 -6" stroke-width="2"/><path d="M-6 5 L-2 2" stroke-width="2"/></g><rect x="6" y="5" width="2.5" height="2.5" fill="#ddd" stroke="none"/></svg>
<svg class="a" style="left:17px;top:180px" width="22" height="18" viewBox="-11 -9 22 18"><g fill="#b4b4b4" stroke="#b4b4b4" stroke-width="1.5" stroke-linecap="round"><path d="M-5 -8 V4 H7 M-8 -5 H4 V7" fill="none" stroke-width="1.8"/></g><rect x="6" y="5" width="2.5" height="2.5" fill="#ddd" stroke="none"/></svg>
<svg class="a" style="left:17px;top:200px" width="22" height="18" viewBox="-11 -9 22 18"><g fill="#b4b4b4" stroke="#b4b4b4" stroke-width="1.5" stroke-linecap="round"><path d="M-6 7 L3 -2" stroke-width="2"/><path d="M1 -4 L5 -8 L8 -5 L4 -1 Z"/></g><rect x="6" y="5" width="2.5" height="2.5" fill="#ddd" stroke="none"/></svg>
<div class="a" style="left:16px;top:219px;width:22px;height:1px;background:#3c3c3c"></div>
<svg class="a" style="left:17px;top:220px" width="22" height="18" viewBox="-11 -9 22 18"><g fill="#b4b4b4" stroke="#b4b4b4" stroke-width="1.5" stroke-linecap="round"><path d="M-6 3 L3 -6 Q7 -6 6 -2 L-2 6 Q-7 7 -6 3 Z" stroke-width="2.5"/></g><rect x="6" y="5" width="2.5" height="2.5" fill="#ddd" stroke="none"/></svg>
<svg class="a" style="left:17px;top:240px" width="22" height="18" viewBox="-11 -9 22 18"><g fill="#b4b4b4" stroke="#b4b4b4" stroke-width="1.5" stroke-linecap="round"><path d="M-7 7 Q-6 2 -2 2 L7 -7" fill="none" stroke-width="1.8"/><path d="M-7 7 Q-2 7 -2 2 Z"/></g><rect x="6" y="5" width="2.5" height="2.5" fill="#ddd" stroke="none"/></svg>
<svg class="a" style="left:17px;top:259px" width="22" height="18" viewBox="-11 -9 22 18"><g fill="#b4b4b4" stroke="#b4b4b4" stroke-width="1.5" stroke-linecap="round"><circle cx="0" cy="-5" r="3"/><path d="M-1 -3 v4 M-7 2 h13 v3 h-13 z"/></g><rect x="6" y="5" width="2.5" height="2.5" fill="#ddd" stroke="none"/></svg>
<svg class="a" style="left:17px;top:277.5px" width="22" height="18" viewBox="-11 -9 22 18"><g fill="#b4b4b4" stroke="#b4b4b4" stroke-width="1.5" stroke-linecap="round"><path d="M-7 6 L6 -7" stroke-width="2"/><path d="M-6 -2 q3 -5 7 -3" fill="none"/></g><rect x="6" y="5" width="2.5" height="2.5" fill="#ddd" stroke="none"/></svg>
<svg class="a" style="left:17px;top:296px" width="22" height="18" viewBox="-11 -9 22 18"><g fill="#b4b4b4" stroke="#b4b4b4" stroke-width="1.5" stroke-linecap="round"><path d="M-7 3 L1 -6 L7 -1 L-1 7 Z"/></g><rect x="6" y="5" width="2.5" height="2.5" fill="#ddd" stroke="none"/></svg>
<svg class="a" style="left:17px;top:314.5px" width="22" height="18" viewBox="-11 -9 22 18"><g fill="#b4b4b4" stroke="#b4b4b4" stroke-width="1.5" stroke-linecap="round"><defs><linearGradient id="gg"><stop offset="0" stop-color="#666"/><stop offset="1" stop-color="#ccc"/></linearGradient></defs><rect x="-6" y="-5" width="12" height="10" rx="1" fill="url(#gg)" stroke-width="1.2"/></g><rect x="6" y="5" width="2.5" height="2.5" fill="#ddd" stroke="none"/></svg>
<svg class="a" style="left:17px;top:333px" width="22" height="18" viewBox="-11 -9 22 18"><g fill="#b4b4b4" stroke="#b4b4b4" stroke-width="1.5" stroke-linecap="round"><path d="M0 -7 Q6 1 5 3 A5 5 0 0 1 -5 3 Q-6 1 0 -7 Z" stroke="none"/></g><rect x="6" y="5" width="2.5" height="2.5" fill="#ddd" stroke="none"/></svg>
<svg class="a" style="left:17px;top:352px" width="22" height="18" viewBox="-11 -9 22 18"><g fill="#b4b4b4" stroke="#b4b4b4" stroke-width="1.5" stroke-linecap="round"><circle cx="-2" cy="-2" r="4.5" stroke="none"/><path d="M1 1 L7 7" stroke-width="2"/></g><rect x="6" y="5" width="2.5" height="2.5" fill="#ddd" stroke="none"/></svg>
<div class="a" style="left:16px;top:370.5px;width:22px;height:1px;background:#3c3c3c"></div>
<svg class="a" style="left:17px;top:373px" width="22" height="18" viewBox="-11 -9 22 18"><g fill="#b4b4b4" stroke="#b4b4b4" stroke-width="1.5" stroke-linecap="round"><path d="M-7 7 L-5 -1 L2 -6 L6 -2 L1 5 Z" stroke="none"/><path d="M2 -6 L4 -8 L8 -4 L6 -2" fill="none" stroke-width="1.2"/><circle cx="-1.5" cy="2" r="1.2" fill="#4b4b4b" stroke="none"/></g><rect x="6" y="5" width="2.5" height="2.5" fill="#ddd" stroke="none"/></svg>
<svg class="a" style="left:17px;top:392px" width="22" height="18" viewBox="-11 -9 22 18"><g fill="#b4b4b4" stroke="#b4b4b4" stroke-width="1.5" stroke-linecap="round"><path d="M-6 -6.5 H6 M-6 -7 V-3.5 M6 -7 V-3.5 M0 -7 V6.5 M-3 6.5 H3" fill="none" stroke-width="2.4" stroke-linecap="butt"/></g><rect x="6" y="5" width="2.5" height="2.5" fill="#ddd" stroke="none"/></svg>
<svg class="a" style="left:17px;top:411px" width="22" height="18" viewBox="-11 -9 22 18"><g fill="#b4b4b4" stroke="#b4b4b4" stroke-width="1.5" stroke-linecap="round"><path d="M-5 -7 L-5 6 L-1.5 2.5 L4 2.5 Z" fill="none" stroke-width="1.6"/><path d="M-1 6 h7" fill="none" stroke-dasharray="1.5 1.5"/></g><rect x="6" y="5" width="2.5" height="2.5" fill="#ddd" stroke="none"/></svg>
<svg class="a" style="left:17px;top:430px" width="22" height="18" viewBox="-11 -9 22 18"><g fill="#b4b4b4" stroke="#b4b4b4" stroke-width="1.5" stroke-linecap="round"><rect x="-6.5" y="-5.5" width="13" height="11" rx="1.5" fill="#999" stroke-width="1.3"/></g><rect x="6" y="5" width="2.5" height="2.5" fill="#ddd" stroke="none"/></svg>
<div class="a" style="left:16px;top:449px;width:22px;height:1px;background:#3c3c3c"></div>
<svg class="a" style="left:17px;top:450px" width="22" height="18" viewBox="-11 -9 22 18"><g fill="#b4b4b4" stroke="#b4b4b4" stroke-width="1.5" stroke-linecap="round"><path d="M-6 1 Q-6 -6 -3 -6 L-3 -1 L-2 -7 L1 -7 L1 -1 L2 -6 L5 -6 L5 1 Q5 7 0 7 L-2 7 Q-5 5 -6 1 Z" stroke="none"/></g><rect x="6" y="5" width="2.5" height="2.5" fill="#ddd" stroke="none"/></svg>
<svg class="a" style="left:17px;top:468.6px" width="22" height="18" viewBox="-11 -9 22 18"><g fill="#b4b4b4" stroke="#b4b4b4" stroke-width="1.5" stroke-linecap="round"><circle cx="-2" cy="-2" r="4.5" fill="none" stroke-width="1.6"/><path d="M1 1 L6 6" stroke-width="2.2"/></g></svg>
<svg class="a" style="left:16px;top:486px" width="24" height="14"><rect x="3" y="3" width="5" height="5" fill="#b4b4b4"/><rect x="5" y="5" width="5" height="5" fill="none" stroke="#b4b4b4"/><path d="M15 4 q5 -2 6 4 M19 7 l2 2 l2 -2" fill="none" stroke="#b4b4b4"/></svg>
<div class="a" style="left:23px;top:508px;width:15px;height:15px;background:#fff;border:1px solid #777"></div>
<div class="a" style="left:15.5px;top:500.5px;width:14px;height:14px;background:#000;border:2px solid #a8a8a8;box-shadow:0 0 0 1px #333"></div>
<div class="a" style="left:21px;top:506px;width:3px;height:3px;background:#333"></div>
<svg class="a" style="left:17px;top:524.6px" width="22" height="18" viewBox="-11 -9 22 18"><g fill="#b4b4b4" stroke="#b4b4b4" stroke-width="1.5" stroke-linecap="round"><rect x="-6" y="-5" width="12" height="10" rx="1" fill="none" stroke-width="1.5"/><circle cx="0" cy="0" r="2.5" stroke="none"/></g></svg>
<svg class="a" style="left:17px;top:544px" width="22" height="18" viewBox="-11 -9 22 18"><g fill="#b4b4b4" stroke="#b4b4b4" stroke-width="1.5" stroke-linecap="round"><rect x="-7" y="-3" width="9" height="8" rx="1" fill="none"/><rect x="-3" y="-6" width="10" height="8" rx="1" stroke="none"/></g><rect x="6" y="5" width="2.5" height="2.5" fill="#ddd" stroke="none"/></svg>
<div class="a" style="left:675px;top:15px;width:255px;height:580px;background:#464646"></div>
<div class="a" style="left:675px;top:15px;width:255px;height:10px;background:#333"></div>
<div class="t" style="left:677px;top:16px;font-size:9px;color:#bbb;line-height:9px">&#215;</div>
<svg class="a" style="left:918px;top:17px" width="10" height="7"><path d="M1 3.5 l3 -3 v6z M5 3.5 l3 -3 v6z" fill="#bdbdbd"/></svg>
<div class="a" style="left:675px;top:25px;width:255px;height:12px;background:#383838"></div>
<div class="a" style="left:675px;top:25px;width:31px;height:13px;background:#484848"></div>
<div class="t" style="left:678px;top:28px;font-size:7px;font-weight:bold;color:#ececec;line-height:8px">Layers</div>
<svg class="a" style="left:914px;top:27px" width="14" height="9"><path d="M1 3 l3 3 l3 -3z" fill="#ddd"/><rect x="8" y="1" width="5" height="1.5" fill="#ccc"/><rect x="8" y="4" width="5" height="1.5" fill="#ccc"/><rect x="8" y="7" width="5" height="1.5" fill="#ccc"/></svg>
<div class="a" style="left:678px;top:42px;width:45px;height:11px;background:linear-gradient(#555,#4c4c4c);border:1px solid #3c3c3c;border-radius:2px"></div>
<svg class="a" style="left:680px;top:43px" width="10" height="9"><circle cx="5.5" cy="3.8" r="2.8" fill="none" stroke="#ccc" stroke-width="1"/><path d="M3.5 5.8 L1 8.5" stroke="#ccc" stroke-width="1.3"/></svg>
<div class="t" style="left:691px;top:44px;font-size:7px;font-weight:bold;color:#e6e6e6;line-height:8px">Kind</div>
<div class="a" style="left:717px;top:45px;width:2px;height:2px;background:#ccc"></div>
<div class="a" style="left:717px;top:49px;width:2px;height:2px;background:#ccc"></div>
<svg class="a" style="left:728px;top:40px" width="102" height="16">
<rect x="2" y="2.5" width="11" height="10" fill="#5a5a5a" stroke="#999" stroke-width="1"/><path d="M3 11 l3 -4 l3 2 l3 -3 v5z" fill="#a8a8a8"/>
<circle cx="25.5" cy="7.5" r="5" fill="#b2b2b2"/><path d="M23 10 l5 -5" stroke="#484848" stroke-width="1.5"/>
<path d="M37 3 h10 v2.5 M42 3 v10 M40 13 h4 M37 3 v2.5" fill="none" stroke="#b2b2b2" stroke-width="1.8"/>
<rect x="56" y="3" width="9" height="9" fill="none" stroke="#a8a8a8" stroke-width="1.3"/><rect x="54.5" y="1.5" width="3" height="3" fill="#ccc"/><rect x="63.5" y="1.5" width="3" height="3" fill="#ccc"/><rect x="54.5" y="10.5" width="3" height="3" fill="#ccc"/><rect x="63.5" y="10.5" width="3" height="3" fill="#ccc"/>
<path d="M73 13 v-5 h4 a4.5 4.5 0 0 1 4.5 4.5 v0.5z" fill="#b2b2b2"/><path d="M75 7 a5 5 0 0 1 8 4" fill="none" stroke="#b2b2b2" stroke-width="1.3"/>
<rect x="91" y="2" width="8" height="5" rx="1" fill="#888"/><rect x="91" y="8" width="8" height="6" rx="1" fill="#333"/>
</svg>
<div class="a" style="left:675px;top:57px;width:255px;height:1px;background:#3a3a3a"></div>
<div class="a" style="left:675px;top:58px;width:255px;height:1px;background:#525252"></div>
<div class="a" style="left:678px;top:62px;width:81px;height:12px;background:linear-gradient(#575757,#4d4d4d);border:1px solid #3c3c3c;border-radius:2px"></div>
<div class="t" style="left:682px;top:64px;font-size:7px;font-weight:bold;color:#e6e6e6;line-height:8px">Normal</div>
<div class="a" style="left:753px;top:65px;width:2px;height:2px;background:#ccc"></div>
<div class="a" style="left:753px;top:69px;width:2px;height:2px;background:#ccc"></div>
<div class="t" style="left:763px;top:64px;font-size:7px;font-weight:bold;color:#e6e6e6;line-height:8px">Opacity:</div>
<div class="a" style="left:792px;top:63px;width:22px;height:10px;background:#2c2c2c;border:1px solid #262626"></div>
<div class="t" style="left:794px;top:64px;font-size:7px;font-weight:bold;color:#e6e6e6;line-height:8px">100%</div>
<div class="a" style="left:815px;top:62px;width:11px;height:12px;background:#585858;border:1px solid #3c3c3c;border-radius:2px"></div>
<div class="a" style="left:818px;top:67px;width:0;height:0;border-top:3px solid #ddd;border-left:2.5px solid transparent;border-right:2.5px solid transparent"></div>
<div class="a" style="left:675px;top:77px;width:255px;height:1px;background:#3a3a3a"></div>
<div class="a" style="left:675px;top:78px;width:255px;height:1px;background:#525252"></div>
<div class="t" style="left:677px;top:85px;font-size:7px;font-weight:bold;color:#e6e6e6;line-height:8px">Lock:</div>
<svg class="a" style="left:697px;top:82px" width="64" height="14">
<rect x="2" y="2" width="9" height="9" fill="#555" stroke="#6a6a6a"/><rect x="3" y="3" width="3.5" height="3.5" fill="#666"/><rect x="6.5" y="6.5" width="3.5" height="3.5" fill="#666"/>
<path d="M18 12 Q19 9 21 9 L28 1" fill="none" stroke="#8a8a8a" stroke-width="1.4"/>
<path d="M38 1 v12 M32 7 h12" stroke="#ababab" stroke-width="1.8"/><circle cx="38" cy="7" r="2.5" fill="#ababab"/>
<rect x="50" y="6" width="9" height="7" rx="1" fill="#ababab"/><path d="M52 6 v-2 a2.5 2.5 0 0 1 5 0 v2" fill="none" stroke="#ababab" stroke-width="1.3"/>
</svg>
<div class="t" style="left:777px;top:85px;font-size:7px;font-weight:bold;color:#e6e6e6;line-height:8px">Fill:</div>
<div class="a" style="left:792px;top:84px;width:22px;height:10px;background:#2c2c2c;border:1px solid #262626"></div>
<div class="t" style="left:794px;top:85px;font-size:7px;font-weight:bold;color:#e6e6e6;line-height:8px">100%</div>
<div class="a" style="left:815px;top:83px;width:11px;height:12px;background:#585858;border:1px solid #3c3c3c;border-radius:2px"></div>
<div class="a" style="left:818px;top:88px;width:0;height:0;border-top:3px solid #ddd;border-left:2.5px solid transparent;border-right:2.5px solid transparent"></div>
<div class="a" style="left:675px;top:98px;width:255px;height:1px;background:#3a3a3a"></div>
<div class="a" style="left:918px;top:99px;width:10px;height:475px;background:#3c3c3c"></div>
<div class="a" style="left:697px;top:100.40px;width:221px;height:19.75px;background:#5a6b7f"></div>
<div class="a" style="left:675px;top:119.15px;width:243px;height:1px;background:#3a3a3a"></div>
<div class="a" style="left:697px;top:100.40px;width:1px;height:19.75px;background:#3e3e3e"></div>
<svg class="a" style="left:680px;top:106.28px" width="12" height="8" viewBox="0 0 12 8"><path d="M0.5 4 Q6 -1.5 11.5 4 Q6 9.5 0.5 4 Z" fill="none" stroke="#ababab" stroke-width="1.1"/><circle cx="6" cy="4" r="1.8" fill="#ababab"/></svg>
<div class="a" style="left:699px;top:102.28px;width:23px;height:16px;background-color:#fff;background-image:linear-gradient(45deg,#ddd 25%,transparent 25%,transparent 75%,#ddd 75%),linear-gradient(45deg,#ddd 25%,transparent 25%,transparent 75%,#ddd 75%);background-size:6px 6px;background-position:0 0,3px 3px;box-shadow:0 0 0 1px #333"></div>
<div class="a" style="left:713px;top:102.28px;width:8px;height:3px;background:#9bbf6a"></div>
<svg class="a" style="left:713px;top:109.28px" width="9" height="9"><rect x="0" y="0" width="9" height="9" fill="#444"/><rect x="1.5" y="1.5" width="6" height="6" fill="none" stroke="#ddd" stroke-width="1"/><rect x="3" y="3" width="3" height="3" fill="#ddd"/></svg>
<div class="pt" style="left:727px;top:107.28px">top</div>
<div class="a" style="left:697px;top:120.15px;width:221px;height:19.75px;background:#5a6b7f"></div>
<div class="a" style="left:675px;top:138.90px;width:243px;height:1px;background:#3a3a3a"></div>
<div class="a" style="left:697px;top:120.15px;width:1px;height:19.75px;background:#3e3e3e"></div>
<svg class="a" style="left:680px;top:126.03px" width="12" height="8" viewBox="0 0 12 8"><path d="M0.5 4 Q6 -1.5 11.5 4 Q6 9.5 0.5 4 Z" fill="none" stroke="#ababab" stroke-width="1.1"/><circle cx="6" cy="4" r="1.8" fill="#ababab"/></svg>
<div class="a" style="left:699px;top:122.03px;width:23px;height:16px;background-color:#fff;background-image:linear-gradient(45deg,#ddd 25%,transparent 25%,transparent 75%,#ddd 75%),linear-gradient(45deg,#ddd 25%,transparent 25%,transparent 75%,#ddd 75%);background-size:6px 6px;background-position:0 0,3px 3px;box-shadow:0 0 0 1px #333"></div>
<svg class="a" style="left:713px;top:129.03px" width="9" height="9"><rect x="0" y="0" width="9" height="9" fill="#444"/><rect x="1.5" y="1.5" width="6" height="6" fill="none" stroke="#ddd" stroke-width="1"/><rect x="3" y="3" width="3" height="3" fill="#ddd"/></svg>
<div class="pt" style="left:727px;top:127.03px">Chi</div>
<div class="a" style="left:697px;top:139.90px;width:221px;height:19.75px;background:#5a6b7f"></div>
<div class="a" style="left:675px;top:158.65px;width:243px;height:1px;background:#3a3a3a"></div>
<div class="a" style="left:697px;top:139.90px;width:1px;height:19.75px;background:#3e3e3e"></div>
<svg class="a" style="left:680px;top:145.78px" width="12" height="8" viewBox="0 0 12 8"><path d="M0.5 4 Q6 -1.5 11.5 4 Q6 9.5 0.5 4 Z" fill="none" stroke="#ababab" stroke-width="1.1"/><circle cx="6" cy="4" r="1.8" fill="#ababab"/></svg>
<div class="a" style="left:699px;top:141.78px;width:23px;height:16px;background-color:#fff;background-image:linear-gradient(45deg,#ddd 25%,transparent 25%,transparent 75%,#ddd 75%),linear-gradient(45deg,#ddd 25%,transparent 25%,transparent 75%,#ddd 75%);background-size:6px 6px;background-position:0 0,3px 3px;box-shadow:0 0 0 1px #333"></div>
<div class="a" style="left:703px;top:144.78px;width:5px;height:9px;background:#3a5a2a;box-shadow:0 0 0 1px #b08040"></div>
<svg class="a" style="left:713px;top:148.78px" width="9" height="9"><rect x="0" y="0" width="9" height="9" fill="#444"/><rect x="1.5" y="1.5" width="6" height="6" fill="none" stroke="#ddd" stroke-width="1"/><rect x="3" y="3" width="3" height="3" fill="#ddd"/></svg>
<div class="pt" style="left:727px;top:146.78px">Front</div>
<div class="a" style="left:675px;top:178.40px;width:243px;height:1px;background:#3a3a3a"></div>
<div class="a" style="left:697px;top:159.65px;width:1px;height:19.75px;background:#3e3e3e"></div>
<div class="a" style="left:681px;top:165.03px;width:9px;height:9px;border:1px solid #555;background:#474747"></div>
<div class="a" style="left:699px;top:161.53px;width:23px;height:16px;background-color:#fff;background-image:linear-gradient(45deg,#ddd 25%,transparent 25%,transparent 75%,#ddd 75%),linear-gradient(45deg,#ddd 25%,transparent 25%,transparent 75%,#ddd 75%);background-size:6px 6px;background-position:0 0,3px 3px;box-shadow:0 0 0 1px #333"></div>
<svg class="a" style="left:701px;top:163.53px" width="10" height="12"><path d="M5 0 L9 12 L1 12 Z" fill="#b8863a"/><path d="M5 4 L7 11 L3 11 Z" fill="#2a4a20"/></svg>
<svg class="a" style="left:713px;top:168.53px" width="9" height="9"><rect x="0" y="0" width="9" height="9" fill="#444"/><rect x="1.5" y="1.5" width="6" height="6" fill="none" stroke="#ddd" stroke-width="1"/><rect x="3" y="3" width="3" height="3" fill="#ddd"/></svg>
<div class="pt" style="left:727px;top:166.53px">Foldout</div>
<svg class="a" style="left:897px;top:164.53px" width="10" height="11"><rect x="1" y="4.5" width="8" height="6" rx="1" fill="#cfcfcf"/><path d="M2.8 4.5 v-1.5 a2.2 2.2 0 0 1 4.4 0 v1.5" fill="none" stroke="#cfcfcf" stroke-width="1.2"/></svg>
<div class="a" style="left:675px;top:198.15px;width:243px;height:1px;background:#3a3a3a"></div>
<div class="a" style="left:697px;top:179.40px;width:1px;height:19.75px;background:#3e3e3e"></div>
<div class="a" style="left:681px;top:184.78px;width:9px;height:9px;border:1px solid #555;background:#474747"></div>
<div class="a" style="left:701px;top:185.28px;width:0;height:0;border-left:5px solid #e0e0e0;border-top:4px solid transparent;border-bottom:4px solid transparent"></div>
<svg class="a" style="left:708px;top:184.28px" width="13" height="10"><path d="M0 1 h5 l1 1.5 h7 v7.5 h-13z" fill="#bdbdbd"/></svg>
<div class="pt" style="left:726px;top:186.28px">Group 1</div>
<svg class="a" style="left:897px;top:184.28px" width="10" height="11"><rect x="1" y="4.5" width="8" height="6" rx="1" fill="#cfcfcf"/><path d="M2.8 4.5 v-1.5 a2.2 2.2 0 0 1 4.4 0 v1.5" fill="none" stroke="#cfcfcf" stroke-width="1.2"/></svg>
<div class="a" style="left:675px;top:217.90px;width:243px;height:1px;background:#3a3a3a"></div>
<div class="a" style="left:697px;top:199.15px;width:1px;height:19.75px;background:#3e3e3e"></div>
<svg class="a" style="left:680px;top:205.03px" width="12" height="8" viewBox="0 0 12 8"><path d="M0.5 4 Q6 -1.5 11.5 4 Q6 9.5 0.5 4 Z" fill="none" stroke="#ababab" stroke-width="1.1"/><circle cx="6" cy="4" r="1.8" fill="#ababab"/></svg>
<svg class="a" style="left:703px;top:203.53px" width="11" height="11"><circle cx="5.5" cy="5.5" r="4.8" fill="#c9c9c9"/><path d="M3 8 l5 -5" stroke="#555" stroke-width="1.4"/></svg>
<div class="pt" style="left:727px;top:206.03px">Levels 2</div>
<div class="a" style="left:675px;top:237.65px;width:243px;height:1px;background:#3a3a3a"></div>
<div class="a" style="left:697px;top:218.90px;width:1px;height:19.75px;background:#3e3e3e"></div>
<svg class="a" style="left:680px;top:224.78px" width="12" height="8" viewBox="0 0 12 8"><path d="M0.5 4 Q6 -1.5 11.5 4 Q6 9.5 0.5 4 Z" fill="none" stroke="#ababab" stroke-width="1.1"/><circle cx="6" cy="4" r="1.8" fill="#ababab"/></svg>
<svg class="a" style="left:703px;top:223.28px" width="11" height="11"><circle cx="5.5" cy="5.5" r="4.8" fill="#c9c9c9"/><path d="M3 8 l5 -5" stroke="#555" stroke-width="1.4"/></svg>
<svg class="a" style="left:720px;top:222.78px" width="6" height="12"><rect x="0.8" y="0.8" width="4.4" height="5" rx="2" fill="none" stroke="#9a9a9a" stroke-width="1.2"/><rect x="0.8" y="6.2" width="4.4" height="5" rx="2" fill="none" stroke="#9a9a9a" stroke-width="1.2"/></svg>
<div class="a" style="left:733px;top:221.78px;width:23px;height:14px;background:#fff;box-shadow:0 0 0 1px #2a2a2a"></div>
<div class="pt" style="left:762px;top:225.78px">Levels 1</div>
<div class="a" style="left:675px;top:257.40px;width:243px;height:1px;background:#3a3a3a"></div>
<div class="a" style="left:697px;top:238.65px;width:1px;height:19.75px;background:#3e3e3e"></div>
<svg class="a" style="left:680px;top:244.53px" width="12" height="8" viewBox="0 0 12 8"><path d="M0.5 4 Q6 -1.5 11.5 4 Q6 9.5 0.5 4 Z" fill="none" stroke="#ababab" stroke-width="1.1"/><circle cx="6" cy="4" r="1.8" fill="#ababab"/></svg>
<div class="a" style="left:699px;top:240.53px;width:23px;height:16px;background:linear-gradient(#dcdcdc,#8a8a8a);box-shadow:0 0 0 1px #333"></div>
<div class="pt" style="left:727px;top:245.53px">Gradient_Background</div>
<svg class="a" style="left:897px;top:243.53px" width="10" height="11"><rect x="1" y="4.5" width="8" height="6" rx="1" fill="#cfcfcf"/><path d="M2.8 4.5 v-1.5 a2.2 2.2 0 0 1 4.4 0 v1.5" fill="none" stroke="#cfcfcf" stroke-width="1.2"/></svg>
<div class="a" style="left:928px;top:15px;width:2px;height:580px;background:#303030"></div>
<div class="a" style="left:675px;top:574px;width:255px;height:15px;background:#4a4a4a;border-top:1px solid #3c3c3c"></div>
<div class="a" style="left:675px;top:589px;width:255px;height:6px;background:#3e3e3e"></div>
<svg class="a" style="left:778px;top:575px" width="135" height="14">
<g fill="none" stroke="#b8b8b8" stroke-width="1.5"><ellipse cx="6" cy="7" rx="3.5" ry="2.5"/><ellipse cx="12" cy="7" rx="3.5" ry="2.5"/></g>
<text x="25" y="11" font-family="Liberation Serif" font-style="italic" font-size="10" fill="#888">fx</text>
<rect x="43" y="3" width="10" height="8" fill="#a8a8a8"/><circle cx="48" cy="7" r="2.3" fill="#484848"/>
<circle cx="69" cy="7" r="4.5" fill="#b8b8b8"/><path d="M66.5 9.5 l5 -5" stroke="#555" stroke-width="1.3"/><rect x="73" y="10" width="2.5" height="2.5" fill="#c8c8c8"/>
<path d="M83 3 h4 l1 1.5 h5 v7 h-10z" fill="#b8b8b8"/>
<rect x="102" y="3" width="9" height="9" fill="#b8b8b8"/><path d="M102 3 h4 v4 h-4z" fill="#888"/>
<path d="M121 5 h9 M123.5 5 l1 -2 h2 l1 2" stroke="#b8b8b8" fill="none" stroke-width="1.2"/><path d="M122 6.5 h7 l-0.7 6 h-5.6z" fill="#b8b8b8"/>
</g></svg>
<div class="a" style="left:0;top:0;width:930px;height:16px;background:linear-gradient(#f0f0f0,#d0d0d0);border-bottom:1px solid #3a3a3a"></div>
<svg class="a" style="left:13px;top:1px" width="11" height="13" viewBox="0 0 11 13"><path d="M7.5 0.5 Q7.5 2.5 5.6 3.2 Q5.5 1.2 7.5 0.5 Z M5.5 3.8 Q4 3 2.8 3.3 Q0.3 3.9 0.4 7 Q0.6 10.5 2.8 12.2 Q3.8 12.8 5 12.2 Q5.8 11.9 6.6 12.3 Q8 12.8 9.1 11.3 Q10 10 10.4 9 Q8.6 8 8.7 6.2 Q8.8 4.6 10 3.9 Q9 3 7.6 3.2 Q6.5 3.3 5.5 3.8 Z" fill="#1a1a1a"/></svg>
<div class="t" style="left:39.5px;top:0.5px;font-size:10.7px;color:#3a3a3a;line-height:13px;letter-spacing:0.4px;color:#333">Photoshop</div>
<div class="t" style="left:108px;top:0.3px;font-size:10.7px;color:#3a3a3a;line-height:13px">File</div>
<div class="t" style="left:138px;top:0.3px;font-size:10.7px;color:#3a3a3a;line-height:13px">Edit</div>
<div class="t" style="left:170px;top:0.3px;font-size:10.7px;color:#3a3a3a;line-height:13px">Image</div>
<div class="t" style="left:254px;top:0.3px;font-size:10.7px;color:#3a3a3a;line-height:13px">Type</div>
<div class="t" style="left:290px;top:0.3px;font-size:10.7px;color:#3a3a3a;line-height:13px">Select</div>
<div class="t" style="left:332px;top:0.3px;font-size:10.7px;color:#3a3a3a;line-height:13px">Filter</div>
<div class="t" style="left:371px;top:0.3px;font-size:10.7px;color:#3a3a3a;line-height:13px">3D</div>
<div class="t" style="left:398px;top:0.3px;font-size:10.7px;color:#3a3a3a;line-height:13px">View</div>
<div class="t" style="left:434px;top:0.3px;font-size:10.7px;color:#3a3a3a;line-height:13px">Window</div>
<div class="t" style="left:486px;top:0.3px;font-size:10.7px;color:#3a3a3a;line-height:13px">Help</div>
<div class="a" style="left:207px;top:0;width:40px;height:15px;background:linear-gradient(#5c6cf8,#3848f2 60%,#2636ee)"></div>
<div class="t" style="left:213px;top:0.3px;font-size:10.7px;color:#3a3a3a;line-height:13px;color:#fff">Layer</div>
<svg class="a" style="left:590px;top:0" width="240" height="15">
<path d="M6 12 L9 2 L11 2 L14 12 L12 12 L10 6 L8 12 Z M3 12 L6 2 L7.5 2 L4.5 12z" fill="#222"/>
<text x="18" y="11.5" font-family="Liberation Sans" font-size="10" fill="#333">5</text>
<ellipse cx="38" cy="7.5" rx="6" ry="4" fill="#333"/><circle cx="38" cy="7.5" r="2" fill="#ddd"/>
<circle cx="61" cy="7.5" r="6" fill="#6a8ed0"/><circle cx="61" cy="7.5" r="4" fill="none" stroke="#dde" stroke-width="1"/>
<path d="M77 3 l4 -1 l4 2 l-4 2 z M77 8 l4 -2 l4 2 l-4 2z" fill="#3a70c8"/><circle cx="86" cy="11" r="2.5" fill="#3a3"/>
<circle cx="102" cy="7.5" r="5.5" fill="none" stroke="#444" stroke-width="1.2"/><path d="M102 4 v7" stroke="#444" stroke-width="1.3"/>
<circle cx="124" cy="7.5" r="5.5" fill="none" stroke="#777" stroke-width="1.1"/><path d="M124 4.5 v3.5 h2.5" fill="none" stroke="#777" stroke-width="1"/>
<path d="M145 3 l3 3 l-3 3 M145 3 v9 l3 -3 l-3 -3" fill="none" stroke="#333" stroke-width="1"/>
<path d="M160 6 q7 -6 14 0 M162.5 8.5 q4.5 -4 9 0 M165 11 q2 -2 4 0" fill="none" stroke="#333" stroke-width="1.4"/><circle cx="167" cy="12.5" r="1" fill="#333"/>
<path d="M180 6 h3 l4 -3 v9 l-4 -3 h-3z" fill="#333"/><path d="M189 5 q2 2.5 0 5 M191 3.5 q3.5 4 0 8" fill="none" stroke="#444" stroke-width="1"/>
<rect x="203" y="4" width="13" height="7" rx="1" fill="none" stroke="#333" stroke-width="1"/><rect x="216.5" y="6" width="1.5" height="3" fill="#333"/><path d="M206 7.5 h6" stroke="#333" stroke-width="1"/>
</svg>
<div class="t" style="left:812px;top:1px;font-size:10.7px;color:#3a3a3a;line-height:13px;color:#7a7a7a;font-size:9.6px">(0:30)</div>
<div class="t" style="left:846px;top:0.5px;font-size:10.7px;color:#3a3a3a;line-height:13px;font-size:10.7px;color:#333">Mon 6:15 PM</div>
<div class="t" style="left:921px;top:1px;font-size:10.7px;color:#3a3a3a;line-height:13px">Re</div>
<div class="a" style="left:204px;top:15px;width:3px;height:580px;background:linear-gradient(90deg,rgba(0,0,0,0),rgba(0,0,0,.35))"></div>
<div class="menu" style="left:207px;top:15px;width:175px;height:580px">
<div class="mi" style="top:4.20px">New</div>
<div class="arr" style="left:161px;top:6.20px"></div>
<div class="mi" style="top:17.95px">Duplicate Layers...</div>
<div class="mi" style="top:31.70px">Delete</div>
<div class="arr" style="left:161px;top:33.70px"></div>
<div class="sep" style="top:49.90px"></div>
<div class="mi" style="top:59.10px">Rename Layer...</div>
<div class="mi" style="top:72.85px">Layer Style</div>
<div class="arr" style="left:161px;top:74.85px"></div>
<div class="mi dis" style="top:86.60px">Smart Filter</div>
<div class="arr dis" style="left:161px;top:88.60px"></div>
<div class="sep" style="top:104.80px"></div>
<div class="mi" style="top:114.00px">New Fill Layer</div>
<div class="arr" style="left:161px;top:116.00px"></div>
<div class="mi" style="top:127.75px">New Adjustment Layer</div>
<div class="arr" style="left:161px;top:129.75px"></div>
<div class="mi dis" style="top:141.50px">Layer Content Options...</div>
<div class="sep" style="top:159.70px"></div>
<div class="mi dis" style="top:168.90px">Layer Mask</div>
<div class="arr dis" style="left:161px;top:170.90px"></div>
<div class="mi dis" style="top:182.65px">Vector Mask</div>
<div class="arr dis" style="left:161px;top:184.65px"></div>
<div class="mi" style="top:196.40px">Create Clipping Mask</div>
<div class="sc" style="right:9px;top:196.40px">&#8997;&#8984;G</div>
<div class="sep" style="top:214.60px"></div>
<div class="mi" style="top:223.80px">Smart Objects</div>
<div class="arr" style="left:161px;top:225.80px"></div>
<div class="mi" style="top:237.55px">Video Layers</div>
<div class="arr" style="left:161px;top:239.55px"></div>
<div class="a" style="left:0;top:250.80px;width:174px;height:13px;background:linear-gradient(#5c6cf8,#3a4cf2 55%,#2838ee)"></div>
<div class="mi" style="top:251.30px;color:#fff">Rasterize</div>
<div class="arr" style="left:161px;top:253.30px;border-left-color:#fff"></div>
<div class="sep" style="top:269.50px"></div>
<div class="mi" style="top:278.70px">New Layer Based Slices</div>
<div class="sep" style="top:296.90px"></div>
<div class="mi" style="top:306.10px">Group Layers</div>
<div class="sc" style="right:9px;top:306.10px">&#8984;G</div>
<div class="mi dis" style="top:319.85px">Ungroup Layers</div>
<div class="sc dis" style="right:9px;top:319.85px">&#8679;&#8984;G</div>
<div class="mi" style="top:333.60px">Hide Layers</div>
<div class="sep" style="top:351.80px"></div>
<div class="mi" style="top:361.00px">Arrange</div>
<div class="arr" style="left:161px;top:363.00px"></div>
<div class="mi dis" style="top:374.75px">Combine Shapes</div>
<div class="arr dis" style="left:161px;top:376.75px"></div>
<div class="sep" style="top:392.95px"></div>
<div class="mi" style="top:402.15px">Align</div>
<div class="arr" style="left:161px;top:404.15px"></div>
<div class="mi" style="top:415.90px">Distribute</div>
<div class="arr" style="left:161px;top:417.90px"></div>
<div class="sep" style="top:434.10px"></div>
<div class="mi" style="top:443.30px">Lock Layers...</div>
<div class="sep" style="top:461.50px"></div>
<div class="mi" style="top:470.70px">Link Layers</div>
<div class="mi dis" style="top:484.45px">Select Linked Layers</div>
<div class="sep" style="top:502.65px"></div>
<div class="mi" style="top:511.85px">Merge Layers</div>
<div class="sc" style="right:9px;top:511.85px">&#8984;E</div>
<div class="mi" style="top:525.60px">Merge Visible</div>
<div class="sc" style="right:9px;top:525.60px">&#8679;&#8984;E</div>
<div class="mi" style="top:539.35px">Flatten Image</div>
<div class="sep" style="top:557.55px"></div>
<div class="mi dis" style="top:566.75px">Matting</div>
<div class="arr dis" style="left:161px;top:568.75px"></div>
</div>
<div class="menu" style="left:382px;top:263px;width:95px;height:157px;border-radius:0 0 5px 5px;box-shadow:2px 3px 8px rgba(0,0,0,.35)">
<div class="mi dis" style="left:15px;top:2.30px">Type</div>
<div class="mi dis" style="left:15px;top:16.00px">Shape</div>
<div class="mi dis" style="left:15px;top:29.70px">Fill Content</div>
<div class="mi dis" style="left:15px;top:43.40px">Vector Mask</div>
<div class="mi" style="left:15px;top:57.10px">Smart Object</div>
<div class="mi dis" style="left:15px;top:70.80px">Video</div>
<div class="mi dis" style="left:15px;top:84.50px">3D</div>
<div class="mi dis" style="left:15px;top:98.20px">Layer Style</div>
<div class="sep" style="top:118px"></div>
<div class="a" style="left:0;top:126.60px;width:95px;height:13px;background:linear-gradient(#5c6cf8,#3a4cf2 55%,#2838ee)"></div>
<div class="mi" style="left:15px;top:126.70px;color:#fff;font-weight:bold">Layers</div>
<div class="mi dis" style="left:15px;top:140.00px">All Layers</div>
</div>
</div></body></html>
